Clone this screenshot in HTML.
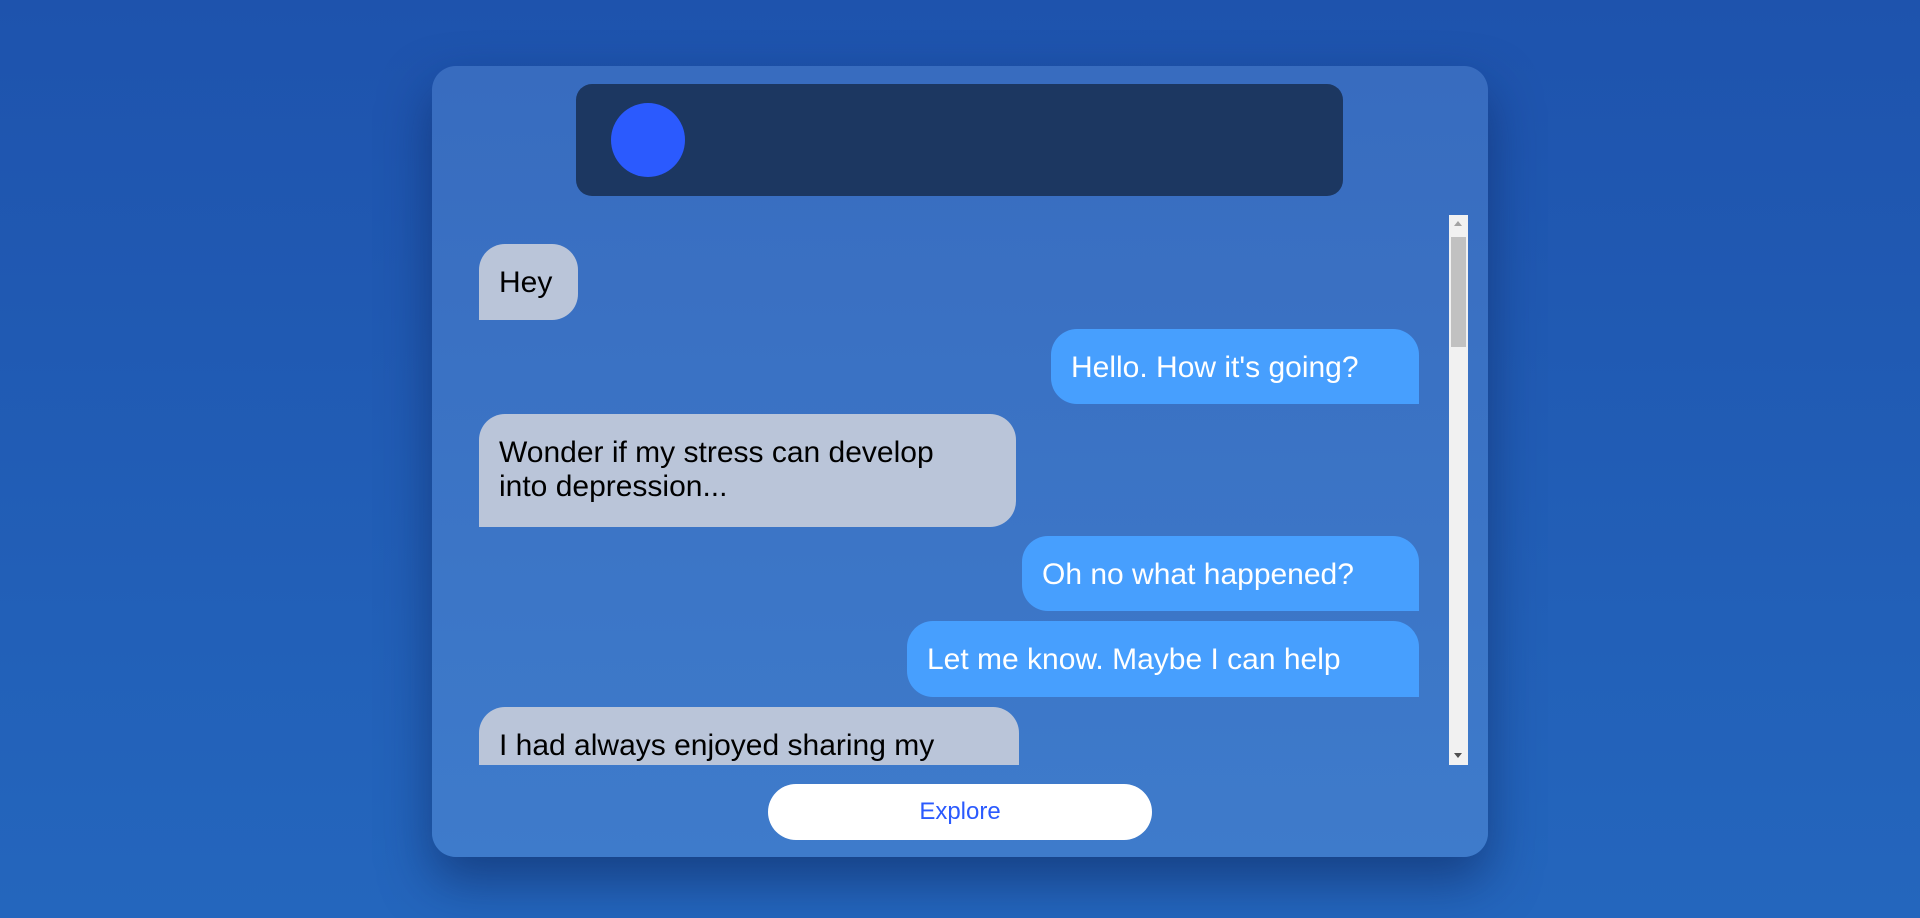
<!DOCTYPE html>
<html><head><style>
*{margin:0;padding:0;box-sizing:border-box}
body{width:1920px;height:918px;overflow:hidden;background:linear-gradient(180deg,#1e53ad 0%,#2466bd 100%);font-family:"Liberation Sans",sans-serif;position:relative}
.card{position:absolute;left:432px;top:66px;width:1056px;height:791px;background:linear-gradient(180deg,#386cbf,#3e7bcb);border-radius:24px;box-shadow:0 24px 50px rgba(10,30,80,.5)}
.hdr{position:absolute;left:576px;top:84px;width:767px;height:112px;background:#1c3761;border-radius:16px}
.av{position:absolute;left:611px;top:103px;width:74px;height:74px;border-radius:50%;background:#2b5afe}
.b{position:absolute;font-size:30px;line-height:34px;padding:22px 20px 20px;border-radius:26px;white-space:nowrap}
.l{background:#bac5d9;color:#000;border-bottom-left-radius:0}
.r{background:#479ffe;color:#fff;border-bottom-right-radius:0}
.clip{position:absolute;left:432px;top:215px;width:1040px;height:550px;overflow:hidden}
.sb{position:absolute;left:1449px;top:215px;width:19px;height:550px;background:#f1f1f1}
.th{position:absolute;left:1451px;top:237px;width:15px;height:110px;background:#c1c1c1}
.btn{position:absolute;left:768px;top:784px;width:384px;height:56px;background:#fff;border-radius:28px;color:#2b5afe;font-size:24px;line-height:56px;text-align:center}
</style></head><body>
<div class="card"></div>
<div class="hdr"></div>
<div class="av"></div>
<div class="clip">
<div class="b l" style="left:47px;top:29px;width:99px;height:76px">Hey</div>
<div class="b r" style="left:619px;top:114px;width:368px;height:75px">Hello. How it's going?</div>
<div class="b l" style="left:47px;top:199px;width:537px;height:113px">Wonder if my stress can develop<br>into depression...</div>
<div class="b r" style="left:590px;top:321px;width:397px;height:75px">Oh no what happened?</div>
<div class="b r" style="left:475px;top:406px;width:512px;height:76px">Let me know. Maybe I can help</div>
<div class="b l" style="left:47px;top:492px;width:540px;height:113px">I had always enjoyed sharing my</div>
</div>
<div class="sb"></div><div class="th"></div>
<div style="position:absolute;left:1454px;top:221px;border:4px solid transparent;border-bottom:5px solid #a3a3a3;border-top:0"></div>
<div style="position:absolute;left:1454px;top:753px;border:4px solid transparent;border-top:5px solid #505050;border-bottom:0"></div>
<div class="btn">Explore</div>
</body></html>
